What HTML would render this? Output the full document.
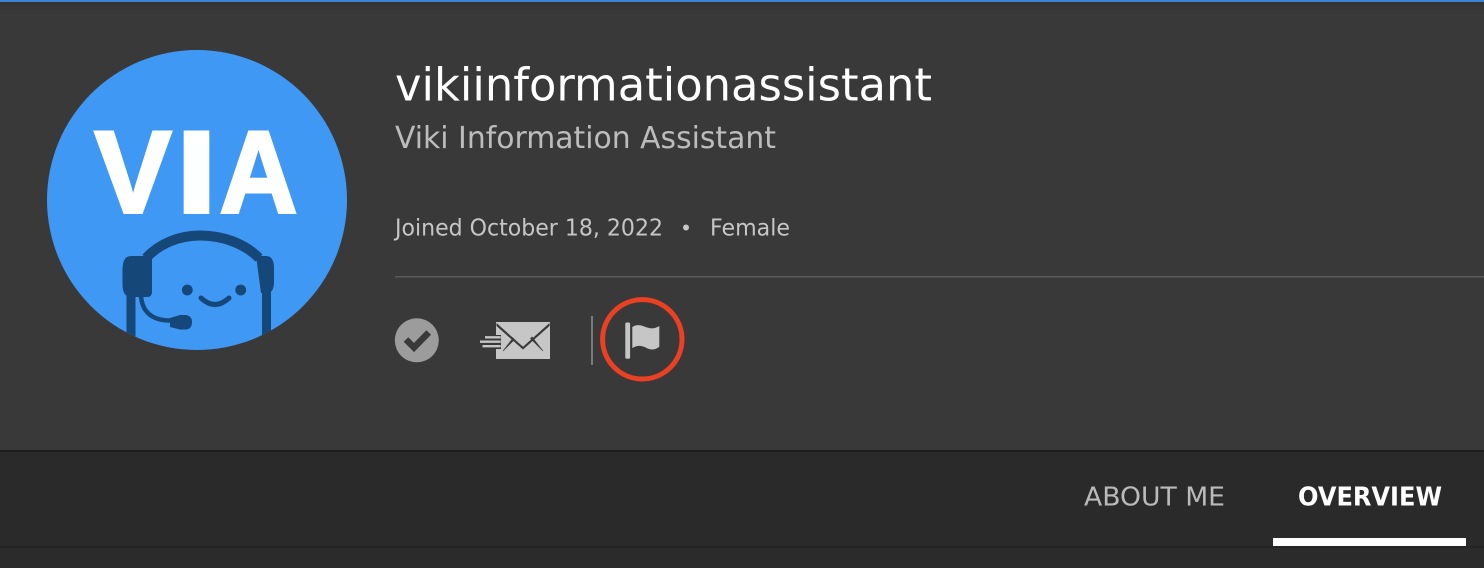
<!DOCTYPE html>
<html><head><meta charset="utf-8"><style>
html,body{margin:0;padding:0;width:1484px;height:568px;overflow:hidden;background:#2a2a2a}
svg{display:block}
text{font-family:"DejaVu Sans","Liberation Sans",sans-serif}
text.via{font-family:"Liberation Sans",sans-serif;font-size:117px;font-weight:700;fill:#fff;stroke:#fff;stroke-width:3px;stroke-miterlimit:2}
</style></head><body>
<svg xmlns="http://www.w3.org/2000/svg" width="1484" height="568" viewBox="0 0 1484 568">
<defs>
<linearGradient id="bg" x1="0" y1="0" x2="0" y2="1"><stop offset="0" stop-color="#333"/><stop offset=".035" stop-color="#393939"/><stop offset="1" stop-color="#393939"/></linearGradient>
<clipPath id="av"><circle cx="197" cy="200" r="150"/></clipPath>
</defs>
<rect width="1484" height="450" fill="url(#bg)"/>
<rect width="1484" height="2" fill="#3f83d4"/>
<rect y="450" width="1484" height="2" fill="#1e1e1e"/>
<rect y="452" width="1484" height="94" fill="#2a2a2a"/>
<rect y="546" width="1484" height="2" fill="#252525"/>
<rect y="548" width="1484" height="20" fill="#2b2b2b"/>

<circle cx="197" cy="200" r="150" fill="#4098f5"/>
<text class="via" x="94.500" y="212.500" textLength="77" lengthAdjust="spacingAndGlyphs">V</text>
<text class="via" x="175.500" y="212.500" textLength="42" lengthAdjust="spacingAndGlyphs">I</text>
<text class="via" x="219.500" y="212.500" textLength="78" lengthAdjust="spacingAndGlyphs">A</text>
<g clip-path="url(#av)" fill="none" stroke="#164779">
<path d="M146 258C160 243 180 235.500 200 235.500C222 235.500 244 243 259 258" stroke-width="10"/>
<path d="M131 296V345M266.500 290V345" stroke-width="9"/>
<path d="M141 296C142 310 150 321 172 320.500" stroke-width="4.500"/>
<path d="M201 298Q215 311 229 298" stroke-width="5" stroke-linecap="round"/>
<g fill="#164779" stroke="none">
<path d="M131 256H148Q152 256 152 260V292Q152 297 147 297H131Q122.500 297 122.500 284V270Q122.500 256 131 256Z"/>
<path d="M256 256H266Q274 256 274 268V282Q274 292 268 293H261Z"/>
<circle cx="187.300" cy="290" r="5.400"/><circle cx="240.700" cy="290" r="5.400"/>
<path d="M170 318L180 315H186Q192 316 192 322Q192 329 186 329.500H180L170 327Z"/>
</g></g>

<text x="395" y="100.500" font-size="45" fill="#fff" textLength="537" lengthAdjust="spacingAndGlyphs">vikiinformationassistant</text>
<text x="395" y="147.800" font-size="30.500" fill="#bcbcbc" textLength="381" lengthAdjust="spacingAndGlyphs">Viki Information Assistant</text>
<text x="395" y="235.300" font-size="23.500" fill="#c6c6c6" textLength="268" lengthAdjust="spacingAndGlyphs">Joined October 18, 2022</text>
<circle cx="686" cy="227.500" r="3" fill="#c6c6c6"/>
<text x="710" y="235.300" font-size="23.500" fill="#c6c6c6" textLength="80" lengthAdjust="spacingAndGlyphs">Female</text>
<rect x="395" y="276" width="1089" height="1.500" fill="#5a5a5a"/>

<circle cx="416.800" cy="340.300" r="22" fill="#9c9c9c"/>
<path d="M406 339.500L414 347.500L428.700 332.500" fill="none" stroke="#393939" stroke-width="6.500"/>

<path d="M496 322H550V359H496Z" fill="#c6c6c6"/>
<rect x="495" y="335" width="6" height="14" fill="#393939"/>
<path d="M496.500 323L523 346.800L549.500 323L549.500 326L523 349.500L496.500 326Z" fill="#393939"/>
<path d="M503 351L513 338L514.500 339.500ZM543 351L532 337L530.500 338.500Z" fill="#393939" stroke="#393939" stroke-width=".6"/>
<path d="M480 341.700H500.700M485 337.300H500.700M482.500 346.200H500.700" stroke="#c6c6c6" stroke-width="2.300"/>

<rect x="591" y="316" width="2" height="49" fill="#7a7a7a"/>
<circle cx="642.300" cy="339.300" r="39.700" fill="none" stroke="#ea4023" stroke-width="5"/>
<rect x="625.300" y="322.500" width="4.800" height="36.300" rx="1.500" fill="#c6c6c6"/>
<path d="M632.300 327C636 324.500 640 324.500 645 326.800C650 329 655 329 659.300 326V346.700C655 350 651 350.500 646 347.800C641 345 636 345.500 632.300 348.300Z" fill="#c6c6c6"/>

<text x="1084" y="505.300" font-size="26" fill="#bababa" textLength="141" lengthAdjust="spacingAndGlyphs">ABOUT ME</text>
<text x="1298" y="505.300" font-size="26" font-weight="700" fill="#fff" textLength="144" lengthAdjust="spacingAndGlyphs">OVERVIEW</text>
<rect x="1273" y="538" width="193" height="8" fill="#fff"/>
</svg>
</body></html>
